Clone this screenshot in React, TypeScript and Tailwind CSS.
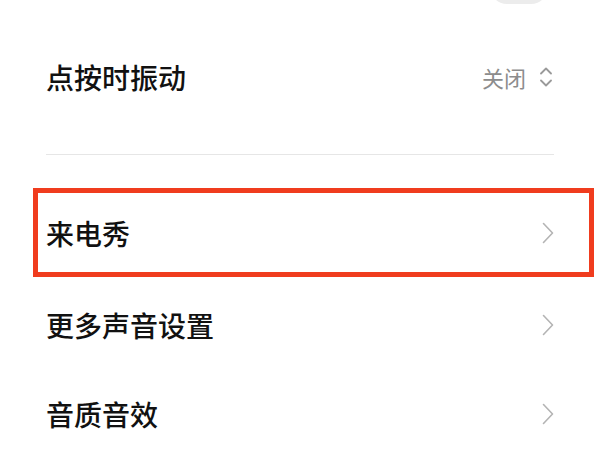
import React from 'react';

function ChevronRight() {
  return (
    <svg width="12" height="22" viewBox="0 0 12 22" fill="none">
      <polyline points="1.5,1.5 10.5,11 1.5,20.5" stroke="#b4b4b4" strokeWidth="1.6" strokeLinecap="round" strokeLinejoin="round" />
    </svg>
  );
}

function ChevronUpDown() {
  return (
    <svg width="12" height="22" viewBox="0 0 12 22" fill="none">
      <polyline points="1,7.5 6,2.5 11,7.5" stroke="#9a9a9a" strokeWidth="1.8" strokeLinecap="round" strokeLinejoin="round" />
      <polyline points="1,14.5 6,19.5 11,14.5" stroke="#9a9a9a" strokeWidth="1.8" strokeLinecap="round" strokeLinejoin="round" />
    </svg>
  );
}

const font = { fontFamily: '"Noto Sans CJK SC", "Noto Sans", sans-serif' };

export default function App() {
  return (
    <div className="w-[600px] h-[450px] overflow-hidden bg-white px-[46px]" style={font}>
      {/* bottom of the switch from the row above */}
      <div className="h-[5px] overflow-hidden flex justify-end pr-[6px]">
        <div className="-mt-[30px] h-[34px] w-[58px] shrink-0 rounded-full bg-[#ececec]" />
      </div>

      <div className="mt-[27px] h-[90px] flex items-center justify-between">
        <span className="text-[28px] font-medium text-[#111]">点按时振动</span>
        <div className="flex items-center gap-[14px] pr-[2px]">
          <span className="text-[22px] text-[#8c8c8c]">关闭</span>
          <ChevronUpDown />
        </div>
      </div>

      <div className="mt-[32px] h-px bg-[#e6e6e6]" />

      <div className="mt-[33px] -ml-[13px] -mr-[40px] h-[89px] border-[5px] border-[#f03c1e] pl-[8px] pr-[35px] flex items-center justify-between">
        <span className="text-[28px] font-medium text-[#111]">来电秀</span>
        <ChevronRight />
      </div>

      <div className="mt-[3px] h-[90px] flex items-center justify-between">
        <span className="text-[28px] font-medium text-[#111]">更多声音设置</span>
        <ChevronRight />
      </div>

      <div className="h-[88px] flex items-center justify-between">
        <span className="text-[28px] font-medium text-[#111]">音质音效</span>
        <ChevronRight />
      </div>
    </div>
  );
}
